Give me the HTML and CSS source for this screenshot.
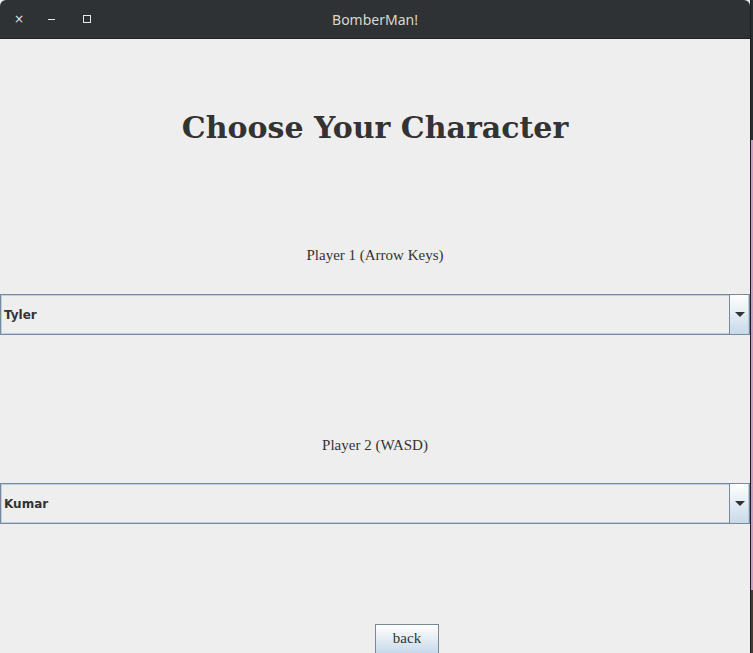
FILE: index.html
```html
<!DOCTYPE html>
<html>
<head>
<meta charset="utf-8">
<link rel="stylesheet" href="styles.css">
</head>
<body>
<div class="window">
  <div class="titlebar">
    <div class="controls">
      <span class="ctl close">×</span>
      <span class="ctl min"></span>
      <span class="ctl max"></span>
    </div>
    <div class="title">BomberMan!</div>
  </div>
  <div class="content">
    <h1 class="heading">Choose Your Character</h1>
    <div class="label l1">Player 1 (Arrow Keys)</div>
    <div class="combo">
      <div class="combo-value">Tyler</div>
      <div class="combo-btn"><span class="arrow"></span></div>
    </div>
    <div class="label l2">Player 2 (WASD)</div>
    <div class="combo">
      <div class="combo-value">Kumar</div>
      <div class="combo-btn"><span class="arrow"></span></div>
    </div>
    <div class="footer">
      <button class="back">back</button>
    </div>
  </div>
</div>
</body>
</html>
```

FILE: styles.css
```css
html, body {
  margin: 0;
  padding: 0;
  height: 653px;
  overflow: hidden;
}
body {
  background: linear-gradient(#2b2e31 0, #2b2e31 140px, #cf9cc4 140px, #cf9cc4 590px, #4a3a36 590px);
  display: flex;
}
.window {
  width: 750px;
  height: 653px;
  border-right: 1px solid #1c1e20;
  display: flex;
  flex-direction: column;
  background: #eeeeee;
}
.titlebar {
  flex: 0 0 38px;
  height: 38px;
  background: #2e3235;
  border-bottom: 1px solid #1f2224;
  border-radius: 6px 6px 0 0;
  position: relative;
  display: flex;
  align-items: center;
  justify-content: center;
}
.controls {
  position: absolute;
  left: 0;
  top: 0;
  height: 38px;
  display: flex;
  align-items: center;
}
.ctl {
  display: block;
  color: #e6e6e6;
}
.close {
  margin-left: 14px;
  font-family: "DejaVu Sans", sans-serif;
  font-size: 12px;
  width: 8px;
  line-height: 12px;
  text-align: center;
}
.min {
  margin-left: 26px;
  width: 7px;
  height: 1px;
  background: #e6e6e6;
}
.max {
  margin-left: 28px;
  width: 6px;
  height: 6px;
  border: 1px solid #e6e6e6;
}
.title {
  font-family: "Noto Sans", "DejaVu Sans", sans-serif;
  font-size: 14px;
  color: #dcd8d0;
  margin-top: 1px;
}
.content {
  flex: 1 1 auto;
  min-height: 0;
  display: flex;
  flex-direction: column;
  background: #eeeeee;
}
.heading {
  flex: none;
  margin: 71px 0 0 0;
  font-family: "DejaVu Serif", serif;
  font-weight: bold;
  font-size: 30px;
  line-height: 36px;
  color: #333333;
  text-align: center;
}
.label {
  flex: none;
  font-family: "Liberation Serif", serif;
  font-size: 15px;
  line-height: 18px;
  color: #333333;
  text-align: center;
}
.l1 {
  margin-top: 100px;
}
.l2 {
  margin-top: 101px;
}
.combo {
  flex: none;
  height: 39px;
  border: 1px solid #7a8a99;
  display: flex;
  background: #eeeeee;
}
.l1 + .combo {
  margin-top: 30px;
}
.l2 + .combo {
  margin-top: 29px;
}
.combo-value {
  flex: 1;
  border: 1px solid #b8cfe5;
  border-right: none;
  font-family: "DejaVu Sans", sans-serif;
  font-weight: bold;
  font-size: 12px;
  color: #333333;
  display: flex;
  align-items: center;
  padding-left: 2px;
}
.combo-btn {
  width: 18px;
  border-left: 1px solid #7a8a99;
  border-right: 1px solid #b8cfe5;
  background: linear-gradient(#ffffff, #c8d9ea);
  display: flex;
  align-items: center;
  justify-content: center;
}
.arrow {
  width: 0;
  height: 0;
  border-left: 5px solid transparent;
  border-right: 5px solid transparent;
  border-top: 5px solid #333333;
  margin-left: 1px;
}
.footer {
  flex: none;
  display: flex;
  justify-content: center;
  padding-left: 64px;
  margin-top: 100px;
}
.back {
  width: 64px;
  height: 30px;
  border: 1px solid #7a8a99;
  background: linear-gradient(#ffffff, #c8d9ea);
  font-family: "Liberation Serif", serif;
  font-size: 15px;
  color: #333333;
  padding: 0 0 2px 0;
}
```
